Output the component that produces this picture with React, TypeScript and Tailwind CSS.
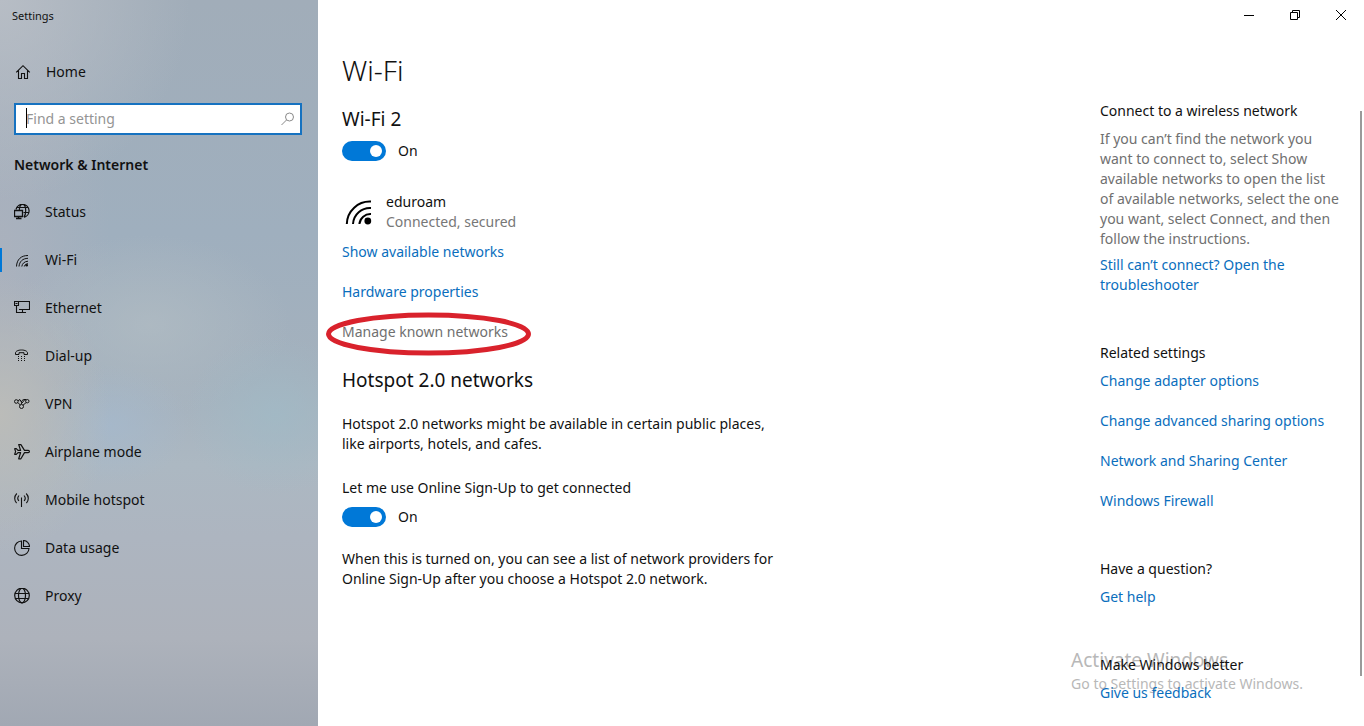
import { useState } from "react";
import type { ReactNode } from "react";

function Icon({ children, className = "size-4" }: { children: ReactNode; className?: string }) {
  return (
    <svg viewBox="0 0 16 16" className={className} fill="none" stroke="currentColor" strokeWidth="1" aria-hidden="true">
      {children}
    </svg>
  );
}

const HomeIcon = () => (
  <Icon>
    <path d="M1.2 8.3 8 1.7l6.800 6.600M3.500 6.500v8h3v-5h3v5h3v-8" strokeWidth="1.100" />
  </Icon>
);

const StatusIcon = () => (
  <Icon>
    <path d="M2 5.500A6.600 6.600 0 1 1 10 13.300M3 3.500h11M9.500 8.500h5.500M5.300 6C5.500 2.800 6.800.5 8.500.5s3.200 2.500 3.200 6.200c0 3-.7 5-1.700 6.500" strokeWidth="1.200" />
    <path d="M.5 6.500h8v6h-8zM4.500 12.500v2.500M2 14.500h5.500" strokeWidth="1.300" />
  </Icon>
);

const WifiArcs = () => (
  <>
    <path d="M2.400 14A11.500 11.500 0 0 1 14.500 2.800M5.500 14A8.500 8.500 0 0 1 14.500 6M8.700 14a5.500 5.500 0 0 1 5.800-5" />
    <circle cx="12.900" cy="12.500" r="1.700" fill="currentColor" stroke="none" />
  </>
);

const WifiIcon = () => (
  <Icon>
    <path d="M2.500 14.500C2.800 7.500 7 3.500 14 3.500M5 14.500C5.500 9.500 8.500 6.500 14 6.300M7.800 14.500c.4-3 2.600-5 6.200-5.300M10.300 14.500c.2-1.500 1.500-2.600 3.700-2.800" />
    <circle cx="12.700" cy="13.300" r="1.300" fill="currentColor" stroke="none" />
  </Icon>
);

const EthernetIcon = () => (
  <Icon>
    <path d="M5 1.500h10.500v8H5M.5 1.500h4v4h-4zM1.500 3.500h2M2.500 5.500v7M8.500 9.500v3M2 12.500h3M5 12.500h7" strokeWidth="1.100" />
  </Icon>
);

const DialupIcon = () => (
  <Icon>
    <path d="M1.500 6.500V5c0-1.700 2.500-3 6-3s6 1.300 6 3v1.500H10V4.700H5v1.800z" strokeLinejoin="round" />
    <path d="M4 8.500h1M7 8.500h1M10 8.500h1M4 10.500h1M7 10.500h1M10 10.500h1M4 12.500h1M7 12.500h1M10 12.500h1" />
  </Icon>
);

const VpnIcon = () => (
  <Icon>
    <circle cx="2.300" cy="5.500" r="1.800" />
    <circle cx="13.300" cy="5.200" r="1.700" />
    <circle cx="7.500" cy="10.500" r="2" />
    <path d="M4 5c1-1.700 2.200-1.700 3 0l1.200 2M3.800 6.500l2.500 2.500M5.500 3.500l3 3.500M7 8l4-4.500M9 9.200l3-2.500M8 4.500l2-1h2" />
  </Icon>
);

const AirplaneIcon = () => (
  <Icon>
    <path d="M.7 4.700h1.600L4 6.400h2.600L4.700.6h2.200l3.600 5.800h3.700c1.600 0 1.600 2.200 0 2.200h-3.700l-3.600 6.200H4.700l1.900-6.200H4l-1.700 1.700H.7l.9-2.700z" strokeLinejoin="round" strokeWidth="1.200" />
  </Icon>
);

const HotspotIcon = () => (
  <Icon>
    <path d="M2.800 1.500C-.1 4.500.2 8.500 2.600 11M5 3.500c-1.600 1.800-1.400 4-.1 5.500M12.200 1.500c2.900 3 2.600 7 .2 9.500M10 3.500c1.600 1.800 1.400 4 .1 5.500M7.500 5.500V15" strokeWidth="1.100" />
  </Icon>
);

const DataIcon = () => (
  <Icon>
    <path d="M7.500 1A7.200 7.200 0 1 0 15 8.500H7.500zM9.500.5v6h6A6.200 6.200 0 0 0 9.500.5z" strokeWidth="1.100" />
  </Icon>
);

const ProxyIcon = () => (
  <Icon>
    <circle cx="8" cy="7.500" r="7.300" strokeWidth="1.200" />
    <ellipse cx="8" cy="7.500" rx="3.500" ry="7.300" strokeWidth="1.200" />
    <path d="M1 5.500h14M1 10.500h14" strokeWidth="1.200" />
  </Icon>
);

const navItems = [
  { label: "Status", icon: StatusIcon },
  { label: "Wi-Fi", icon: WifiIcon, active: true },
  { label: "Ethernet", icon: EthernetIcon },
  { label: "Dial-up", icon: DialupIcon },
  { label: "VPN", icon: VpnIcon },
  { label: "Airplane mode", icon: AirplaneIcon },
  { label: "Mobile hotspot", icon: HotspotIcon },
  { label: "Data usage", icon: DataIcon },
  { label: "Proxy", icon: ProxyIcon },
];

function Toggle({ label }: { label: string }) {
  const [on, setOn] = useState(true);
  return (
    <div className="flex h-5 items-center gap-3">
      <button
        type="button"
        role="switch"
        aria-checked={on}
        aria-label={label}
        onClick={() => setOn(!on)}
        className={`flex h-5 w-11 items-center rounded-full px-1 ${on ? "justify-end bg-[#0078d7]" : "justify-start bg-[#777777]"}`}
      >
        <span className="size-3 rounded-full bg-white" />
      </button>
      <span>{on ? "On" : "Off"}</span>
    </div>
  );
}

function TextLink({ children, className = "" }: { children: ReactNode; className?: string }) {
  return (
    <a href="#" className={`block w-fit text-[#0a6ebd] ${className}`}>
      {children}
    </a>
  );
}

function Sidebar() {
  return (
    <aside className="flex w-[318px] shrink-0 flex-col bg-[radial-gradient(ellipse_190px_200px_at_0px_0px,#b7bdc5_0%,#b7bdc500_100%),radial-gradient(ellipse_110px_140px_at_0px_415px,#bbbcb9_0%,#bbbcb900_100%),radial-gradient(ellipse_80px_60px_at_110px_425px,#a5b9cdbb_0%,#a5b9cd00_100%),radial-gradient(ellipse_90px_80px_at_275px_415px,#a0bac6bb_0%,#a0bac600_100%),radial-gradient(ellipse_140px_90px_at_150px_325px,#b1bcc3bb_0%,#b1bcc300_100%),radial-gradient(ellipse_110px_300px_at_0px_260px,#adb2bdcc_0%,#adb2bd00_100%),linear-gradient(to_bottom,#a1adb9_0%,#9fafbe_32%,#a4b1bd_52%,#acb8c2_64%,#adb5c0_74%,#adb2bb_88%,#a1a8b3_100%)]">
      <div className="flex h-8 items-center px-3 text-[11px]">Settings</div>
      <a href="#" className="mt-4 flex h-12 items-center gap-[15px] px-[15px]">
        <HomeIcon />
        <span>Home</span>
      </a>
      <div className="relative mt-[7px] pr-4 pl-[14px]">
        <input
          type="text"
          aria-label="Find a setting"
          placeholder="Find a setting"
          className="block h-8 w-full border-2 border-[#1672c0] bg-white pr-8 pb-0.5 pl-[10px] outline-none placeholder:text-[#949494]"
        />
        <span className="absolute top-[5px] left-[26px] h-5 w-px bg-black" />
        <svg viewBox="0 0 16 16" className="absolute top-2 right-[22px] size-4 text-[#8a8a8a]" fill="none" stroke="currentColor" aria-hidden="true">
          <circle cx="9.500" cy="6" r="4" />
          <path d="M6.500 9 1.500 14" />
        </svg>
      </div>
      <h2 className="mt-5 px-[14px] font-semibold">Network &amp; Internet</h2>
      <nav className="mt-[13px]">
        {navItems.map(({ label, icon: ItemIcon, active }) => (
          <a key={label} href="#" aria-current={active ? "page" : undefined} className="flex h-12 items-center">
            <span className={`h-6 w-0.5 ${active ? "bg-[#0078d7]" : ""}`} />
            <span className="flex items-center gap-[15px] pl-3">
              <ItemIcon />
              {label}
            </span>
          </a>
        ))}
      </nav>
    </aside>
  );
}

function WindowControls() {
  return (
    <div className="flex h-[30px] justify-end text-black">
      <button type="button" aria-label="Minimize" className="flex w-[46px] items-center justify-center">
        <svg viewBox="0 0 10 10" className="size-[10px]" stroke="currentColor" aria-hidden="true"><path d="M0 5.500h10" /></svg>
      </button>
      <button type="button" aria-label="Restore" className="flex w-[46px] items-center justify-center">
        <svg viewBox="0 0 10 10" className="size-[10px]" fill="none" stroke="currentColor" aria-hidden="true"><path d="M.5 2.500h7v7h-7zM2.500 2.500v-2h7v7h-2" /></svg>
      </button>
      <button type="button" aria-label="Close" className="flex w-[46px] items-center justify-center">
        <svg viewBox="0 0 10 10" className="size-[10px]" stroke="currentColor" aria-hidden="true"><path d="m0 0 10 10M10 0 0 10" /></svg>
      </button>
    </div>
  );
}

function WifiSettings() {
  return (
    <section className="min-w-0 flex-1 pt-[22px] pl-6">
      <h1 className="text-[28px] leading-9 font-light">Wi-Fi</h1>
      <h2 className="mt-[17px] mb-2 text-[19px] leading-7">Wi-Fi 2</h2>
      <Toggle label="Wi-Fi 2" />
      <div className="mt-[31px] flex items-center gap-3">
        <Icon className="size-8 text-black"><WifiArcs /></Icon>
        <div>
          <p>eduroam</p>
          <p className="text-[#777777]">Connected, secured</p>
        </div>
      </div>
      <div className="mt-[10px] space-y-5">
        <TextLink>Show available networks</TextLink>
        <TextLink>Hardware properties</TextLink>
        <div className="relative w-fit">
          <a href="#" className="block text-[#707070]">Manage known networks</a>
          <svg viewBox="0 0 206 44" className="absolute -top-[10px] -left-4 h-11 w-[206px] max-w-none" fill="none" stroke="#d9222c" strokeWidth="5" aria-hidden="true">
            <ellipse cx="102.500" cy="22" rx="100" ry="19" />
          </svg>
        </div>
      </div>
      <h2 className="mt-6 text-[19px] leading-7">Hotspot 2.0 networks</h2>
      <p className="mt-5 max-w-[440px]">Hotspot 2.0 networks might be available in certain public places, like airports, hotels, and cafes.</p>
      <p className="mt-6 mb-[9px]">Let me use Online Sign-Up to get connected</p>
      <Toggle label="Let me use Online Sign-Up to get connected" />
      <p className="mt-[22px] max-w-[440px]">When this is turned on, you can see a list of network providers for Online Sign-Up after you choose a Hotspot 2.0 network.</p>
    </section>
  );
}

function HelpPanel() {
  return (
    <aside className="relative z-10 w-60 shrink-0 pt-[71px]">
      <h3>Connect to a wireless network</h3>
      <p className="mt-2 text-[#707070]">
        If you can’t find the network you want to connect to, select Show available networks to open the list of available networks, select the one you want, select Connect, and then follow the instructions.
      </p>
      <TextLink className="mt-[6px]">Still can’t connect? Open the troubleshooter</TextLink>
      <h3 className="mt-12">Related settings</h3>
      <div className="mt-2 space-y-5">
        <TextLink>Change adapter options</TextLink>
        <TextLink>Change advanced sharing options</TextLink>
        <TextLink>Network and Sharing Center</TextLink>
        <TextLink>Windows Firewall</TextLink>
      </div>
      <h3 className="mt-12">Have a question?</h3>
      <TextLink className="mt-2">Get help</TextLink>
      <h3 className="mt-12">Make Windows better</h3>
      <TextLink className="mt-2">Give us feedback</TextLink>
    </aside>
  );
}

export default function App() {
  return (
    <div className="flex min-h-screen bg-white font-['Noto_Sans','Open_Sans',sans-serif] text-[14px] leading-5 text-[#111111]">
      <Sidebar />
      <main className="relative flex min-w-0 flex-1 flex-col">
        <WindowControls />
        <div className="flex flex-1">
          <WifiSettings />
          <HelpPanel />
          <div className="flex w-6 shrink-0 flex-col items-end pt-[81px] pr-[2px] pb-[50px]">
            <div className="w-0.5 flex-1 bg-[#9a9a9a]" />
          </div>
        </div>
        <div className="pointer-events-none absolute right-[61px] bottom-8 text-[#b8b8b8]">
          <p className="text-[19px] leading-7">Activate Windows</p>
          <p>Go to Settings to activate Windows.</p>
        </div>
      </main>
    </div>
  );
}
